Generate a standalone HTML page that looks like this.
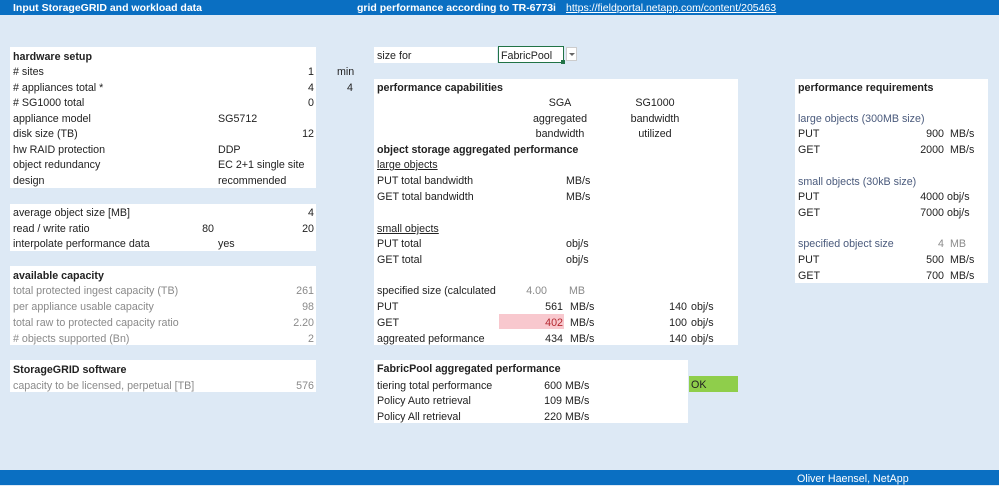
<!DOCTYPE html>
<html><head><meta charset="utf-8"><style>
body{margin:0;width:999px;height:485px;background:#dde9f5;position:relative;overflow:hidden;font-family:"Liberation Sans",sans-serif;font-size:10.7px;color:#222}
.b{position:absolute;background:#fff}
.t{position:absolute;line-height:14px;white-space:nowrap;margin-top:1px}
.r{text-align:right}
.bold{font-weight:bold}
.g{color:#8a8a8a}
.bl{color:#4a5a7c}
.u{text-decoration:underline}
.c{text-align:center}
</style></head><body>
<div style="position:absolute;left:0;top:0;width:999px;height:15px;background:#0a6fc2"></div>
<div class="t bold" style="left:13px;top:0px;color:#fff;font-size:10.5px">Input StorageGRID and workload data</div>
<div class="t bold" style="left:357px;top:0px;color:#fff;font-size:10.5px">grid performance according to TR-6773i</div>
<div class="t u" style="left:566px;top:0px;color:#fff;font-size:10.5px">https://fieldportal.netapp.com/content/205463</div>
<div style="position:absolute;left:0;top:470px;width:999px;height:15px;background:#0a6fc2"></div>
<div class="t" style="left:797px;top:471px;color:#fff">Oliver Haensel, NetApp</div>

<div class="b" style="left:10px;top:47px;width:306px;height:141px"></div>
<div class="b" style="left:10px;top:204px;width:306px;height:47px"></div>
<div class="b" style="left:10px;top:266px;width:306px;height:79px"></div>
<div class="b" style="left:10px;top:360px;width:306px;height:32px"></div>

<div class="t bold" style="left:13px;top:49px">hardware setup</div>
<div class="t" style="left:13px;top:64px"># sites</div><div class="t r" style="right:685px;top:64px">1</div><div class="t" style="left:337px;top:64px">min</div>
<div class="t" style="left:13px;top:80px"># appliances total *</div><div class="t r" style="right:685px;top:80px">4</div><div class="t r" style="right:646px;top:80px">4</div>
<div class="t" style="left:13px;top:95px"># SG1000 total</div><div class="t r" style="right:685px;top:95px">0</div>
<div class="t" style="left:13px;top:111px">appliance model</div><div class="t" style="left:218px;top:111px">SG5712</div>
<div class="t" style="left:13px;top:126px">disk size (TB)</div><div class="t r" style="right:685px;top:126px">12</div>
<div class="t" style="left:13px;top:142px">hw RAID protection</div><div class="t" style="left:218px;top:142px">DDP</div>
<div class="t" style="left:13px;top:157px">object redundancy</div><div class="t" style="left:218px;top:157px">EC 2+1 single site</div>
<div class="t" style="left:13px;top:173px">design</div><div class="t" style="left:218px;top:173px">recommended</div>

<div class="t" style="left:13px;top:205px">average object size [MB]</div><div class="t r" style="right:685px;top:205px">4</div>
<div class="t" style="left:13px;top:221px">read / write ratio</div><div class="t r" style="right:785px;top:221px">80</div><div class="t r" style="right:685px;top:221px">20</div>
<div class="t" style="left:13px;top:236px">interpolate performance data</div><div class="t" style="left:218px;top:236px">yes</div>

<div class="t bold" style="left:13px;top:268px">available capacity</div>
<div class="t g" style="left:13px;top:283px">total protected ingest capacity (TB)</div><div class="t r g" style="right:685px;top:283px">261</div>
<div class="t g" style="left:13px;top:299px">per appliance usable capacity</div><div class="t r g" style="right:685px;top:299px">98</div>
<div class="t g" style="left:13px;top:315px">total raw to protected capacity ratio</div><div class="t r g" style="right:685px;top:315px">2.20</div>
<div class="t g" style="left:13px;top:331px"># objects supported (Bn)</div><div class="t r g" style="right:685px;top:331px">2</div>

<div class="t bold" style="left:13px;top:362px">StorageGRID software</div>
<div class="t g" style="left:13px;top:378px">capacity to be licensed, perpetual [TB]</div><div class="t r g" style="right:685px;top:378px">576</div>

<div class="b" style="left:374px;top:47px;width:123px;height:16px"></div>
<div class="t" style="left:377px;top:48px">size for</div>
<div class="b" style="left:498px;top:46px;width:64px;height:15px;border:1px solid #217346"></div>
<div style="position:absolute;left:561px;top:60px;width:4px;height:4px;background:#217346"></div>
<div class="t" style="left:501px;top:48px">FabricPool</div>
<div class="b" style="left:566px;top:47px;width:11px;height:14px;border:1px solid #ccc;box-sizing:border-box"></div>
<div style="position:absolute;left:569px;top:53px;border-left:3px solid transparent;border-right:3px solid transparent;border-top:3px solid #666"></div>

<div class="b" style="left:374px;top:79px;width:364px;height:266px"></div>
<div class="t bold" style="left:377px;top:80px">performance capabilities</div>
<div class="t c" style="left:520px;width:80px;top:95px">SGA</div>
<div class="t c" style="left:520px;width:80px;top:111px">aggregated</div>
<div class="t c" style="left:520px;width:80px;top:126px">bandwidth</div>
<div class="t c" style="left:615px;width:80px;top:95px">SG1000</div>
<div class="t c" style="left:615px;width:80px;top:111px">bandwidth</div>
<div class="t c" style="left:615px;width:80px;top:126px">utilized</div>
<div class="t bold" style="left:377px;top:142px">object storage aggregated performance</div>
<div class="t u" style="left:377px;top:157px">large objects</div>
<div class="t" style="left:377px;top:173px">PUT total bandwidth</div><div class="t" style="left:566px;top:173px">MB/s</div>
<div class="t" style="left:377px;top:189px">GET total bandwidth</div><div class="t" style="left:566px;top:189px">MB/s</div>
<div class="t u" style="left:377px;top:221px">small objects</div>
<div class="t" style="left:377px;top:236px">PUT total</div><div class="t" style="left:566px;top:236px">obj/s</div>
<div class="t" style="left:377px;top:252px">GET total</div><div class="t" style="left:566px;top:252px">obj/s</div>
<div class="t" style="left:377px;top:283px">specified size (calculated</div><div class="t r g" style="right:452px;top:283px">4.00</div><div class="t g" style="left:569px;top:283px">MB</div>
<div class="t" style="left:377px;top:299px">PUT</div><div class="t r" style="right:436px;top:299px">561</div><div class="t" style="left:570px;top:299px">MB/s</div><div class="t r" style="right:312px;top:299px">140</div><div class="t" style="left:691px;top:299px">obj/s</div>
<div style="position:absolute;left:499px;top:314px;width:65px;height:15px;background:#f8c8ce"></div>
<div class="t" style="left:377px;top:315px">GET</div><div class="t r" style="right:436px;top:315px;color:#b3262e">402</div><div class="t" style="left:570px;top:315px">MB/s</div><div class="t r" style="right:312px;top:315px">100</div><div class="t" style="left:691px;top:315px">obj/s</div>
<div class="t" style="left:377px;top:331px">aggreated peformance</div><div class="t r" style="right:436px;top:331px">434</div><div class="t" style="left:570px;top:331px">MB/s</div><div class="t r" style="right:312px;top:331px">140</div><div class="t" style="left:691px;top:331px">obj/s</div>

<div class="b" style="left:374px;top:360px;width:314px;height:63px"></div>
<div class="t bold" style="left:377px;top:361px">FabricPool aggregated performance</div>
<div class="t" style="left:377px;top:378px">tiering total performance</div><div class="t r" style="right:437px;top:378px">600</div><div class="t" style="left:565px;top:378px">MB/s</div>
<div class="t" style="left:377px;top:393px">Policy Auto retrieval</div><div class="t r" style="right:437px;top:393px">109</div><div class="t" style="left:565px;top:393px">MB/s</div>
<div class="t" style="left:377px;top:409px">Policy All retrieval</div><div class="t r" style="right:437px;top:409px">220</div><div class="t" style="left:565px;top:409px">MB/s</div>
<div style="position:absolute;left:689px;top:376px;width:49px;height:16px;background:#8fce4b"></div>
<div class="t" style="left:691px;top:377px">OK</div>

<div class="b" style="left:795px;top:79px;width:193px;height:204px"></div>
<div class="t bold" style="left:798px;top:80px">performance requirements</div>
<div class="t bl" style="left:798px;top:111px">large objects (300MB size)</div>
<div class="t" style="left:798px;top:126px">PUT</div><div class="t r" style="right:55px;top:126px">900</div><div class="t" style="left:950px;top:126px">MB/s</div>
<div class="t" style="left:798px;top:142px">GET</div><div class="t r" style="right:55px;top:142px">2000</div><div class="t" style="left:950px;top:142px">MB/s</div>
<div class="t bl" style="left:798px;top:174px">small objects (30kB size)</div>
<div class="t" style="left:798px;top:189px">PUT</div><div class="t r" style="right:55px;top:189px">4000</div><div class="t" style="left:947px;top:189px">obj/s</div>
<div class="t" style="left:798px;top:205px">GET</div><div class="t r" style="right:55px;top:205px">7000</div><div class="t" style="left:947px;top:205px">obj/s</div>
<div class="t bl" style="left:798px;top:236px">specified object size</div><div class="t r g" style="right:55px;top:236px">4</div><div class="t g" style="left:950px;top:236px">MB</div>
<div class="t" style="left:798px;top:252px">PUT</div><div class="t r" style="right:55px;top:252px">500</div><div class="t" style="left:950px;top:252px">MB/s</div>
<div class="t" style="left:798px;top:268px">GET</div><div class="t r" style="right:55px;top:268px">700</div><div class="t" style="left:950px;top:268px">MB/s</div>
</body></html>
